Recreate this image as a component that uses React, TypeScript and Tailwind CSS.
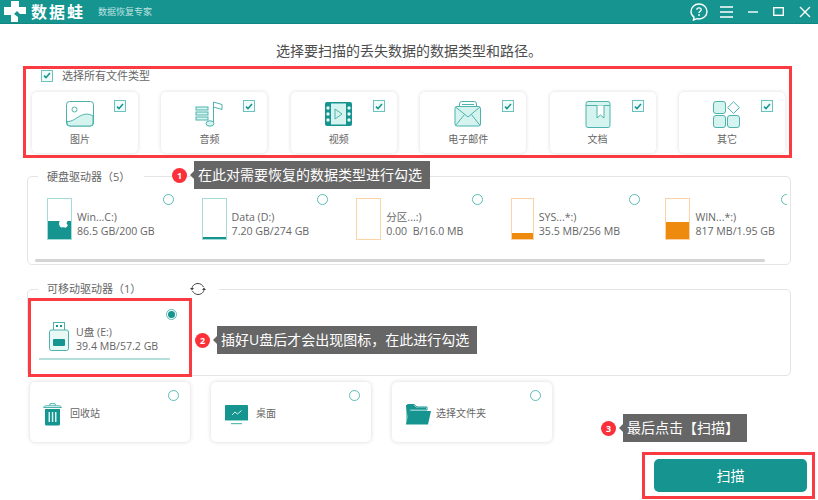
import React from 'react'

const FONT = 'font-["Open_Sans","Noto_Sans_CJK_SC",sans-serif]'

const Radio = ({ checked = false }: { checked?: boolean }) => (
  <div className="w-[11px] h-[11px] rounded-full border border-[#5bbdb6] bg-white flex items-center justify-center shrink-0">
    {checked && <div className="w-[7px] h-[7px] rounded-full bg-[#159490]" />}
  </div>
)

const Check = () => (
  <div className="w-[12px] h-[12px] border border-[#6cc2bc] bg-[#f1fbf9] flex items-center justify-center shrink-0">
    <svg width="8" height="7" viewBox="0 0 8 7" fill="none">
      <path d="M1 3.6 L3 5.6 L7 1" stroke="#159490" strokeWidth="1.5" />
    </svg>
  </div>
)

const S = '#4db3ac'
const F = '#d6f4ef'

const ImageIcon = () => (
  <svg width="28" height="26" viewBox="0 0 28 26" fill="none">
    <rect x="0.5" y="0.5" width="27" height="24.5" rx="3" fill="#fff" stroke={S} />
    <circle cx="8.5" cy="8.5" r="2.5" stroke={S} />
    <path d="M1 20.5 C6 21 10 17 14 15 C18 13 22 12 27 15 L27 22 Q27 25 24 25 L4 25 Q1 25 1 22 Z" fill={F} stroke={S} />
  </svg>
)

const MusicIcon = () => (
  <svg width="28" height="26" viewBox="0 0 28 26" fill="none">
    <rect x="1" y="6" width="12" height="3" fill={F} stroke={S} />
    <rect x="1" y="11" width="12" height="3" fill={F} stroke={S} />
    <rect x="1" y="16" width="12" height="3" fill={F} stroke={S} />
    <ellipse cx="15" cy="22.5" rx="4" ry="2.7" fill={F} stroke={S} />
    <path d="M18.5 22 L18.5 1 L27 3.5 L27 8.5 L18.5 6" fill="#fff" stroke={S} />
  </svg>
)

const VideoIcon = () => (
  <svg width="28" height="24" viewBox="0 0 28 24" fill="none">
    <rect x="0" y="0" width="27" height="24" rx="2" fill="#159490" />
    <rect x="6" y="1.5" width="15" height="21" fill={F} />
    <path d="M10 7 L17 12 L10 17 Z" fill={F} stroke={S} />
    <circle cx="3" cy="6" r="1.7" fill="#e8f7f5" />
    <circle cx="3" cy="12" r="1.7" fill="#e8f7f5" />
    <circle cx="3" cy="18" r="1.7" fill="#e8f7f5" />
    <circle cx="24" cy="6" r="1.7" fill="#e8f7f5" />
    <circle cx="24" cy="12" r="1.7" fill="#e8f7f5" />
    <circle cx="24" cy="18" r="1.7" fill="#e8f7f5" />
  </svg>
)

const MailIcon = () => (
  <svg width="28" height="26" viewBox="0 0 28 26" fill="none">
    <rect x="5.5" y="0.5" width="17" height="7" rx="2.5" fill="#fff" stroke={S} />
    <line x1="8" y1="3.5" x2="20" y2="3.5" stroke={S} />
    <rect x="1" y="5.5" width="25.5" height="19.5" rx="2" fill={F} stroke={S} />
    <path d="M1.5 6 L14 16 L26 6 M1.5 24.5 L10.5 13.5 M26 24.5 L17.5 13.5" stroke={S} />
  </svg>
)

const DocIcon = () => (
  <svg width="26" height="27" viewBox="0 0 26 27" fill="none">
    <rect x="1" y="0.5" width="24" height="26" rx="2" fill={F} stroke={S} />
    <line x1="1" y1="4.5" x2="25" y2="4.5" stroke={S} />
    <path d="M12 4.5 L12 17 L15.5 14 L19 17 L19 4.5" fill="#fff" stroke={S} />
  </svg>
)

const OtherIcon = () => (
  <svg width="27" height="27" viewBox="0 0 27 27" fill="none">
    <rect x="0.5" y="0.5" width="12" height="12" rx="2.5" fill={F} stroke={S} />
    <rect x="0.5" y="14.5" width="12" height="12" rx="2.5" fill={F} stroke={S} />
    <rect x="14.5" y="14.5" width="12" height="12" rx="2.5" fill={F} stroke={S} />
    <path d="M20.5 0.8 L26.4 6.6 L20.5 12.4 L14.6 6.6 Z" fill="#fff" stroke={S} />
  </svg>
)

const fileTypes = [
  { label: '图片', icon: <ImageIcon /> },
  { label: '音频', icon: <MusicIcon /> },
  { label: '视频', icon: <VideoIcon /> },
  { label: '电子邮件', icon: <MailIcon /> },
  { label: '文档', icon: <DocIcon /> },
  { label: '其它', icon: <OtherIcon /> },
]

interface Drive {
  name: string
  size: string
  fill: number
  system: boolean
  apple?: boolean
  iconWidth: string
  radioShift?: string
}

const drives: Drive[] = [
  { name: 'Win...C:)', size: '86.5 GB/200 GB', fill: 18, system: true, apple: true, iconWidth: 'w-[25px]' },
  { name: 'Data (D:)', size: '7.20 GB/274 GB', fill: 2, system: true, iconWidth: 'w-[25px]', radioShift: 'mr-[1px]' },
  { name: '分区...:)', size: '0.00  B/16.0 MB', fill: 0, system: false, iconWidth: 'w-[25px]' },
  { name: 'SYS...*:)', size: '35.5 MB/256 MB', fill: 6, system: false, iconWidth: 'w-[23px]', radioShift: '-mr-[2px]' },
  { name: 'WIN...*:)', size: '817 MB/1.95 GB', fill: 17, system: false, iconWidth: 'w-[25px]' },
]

const DriveCard = ({ drive }: { drive: Drive }) => (
  <div className="w-[127px] shrink-0 flex items-start">
    <div
      className={`relative mt-[4px] ${drive.iconWidth} h-[42px] border flex items-end shrink-0 ${
        drive.system ? 'border-[#a5dcd7]' : 'border-[#fbd3a6]'
      }`}
    >
      <div
        className={`w-full ${drive.system ? 'bg-[#159490]' : 'bg-[#ee8a0e]'}`}
        style={{ height: drive.fill }}
      />
      {drive.apple && (
        <svg className="absolute right-[3px] bottom-[11px]" width="9" height="10" viewBox="0 0 9 10">
          <path d="M4.5 2.5 C6 1.5 8 2 8.5 3.5 C7 4.5 7.5 6.5 9 7 C8 9 7 10 5.5 9.5 C4.5 9.2 4 9.2 3 9.5 C1 10 0 7 0 5 C0 3 2.5 1.5 4.5 2.5 Z M4.5 2 C4.5 1 5.2 0.2 6.2 0 C6.4 1 5.5 2 4.5 2 Z" fill="#fff" />
        </svg>
      )}
    </div>
    <div className="ml-[5px] mt-[16px] text-[10.6px] leading-[14px] text-[#666] whitespace-pre">
      <div>{drive.name}</div>
      <div>{drive.size}</div>
    </div>
    <div className={`ml-auto ${drive.radioShift ?? ''}`}>
      <Radio />
    </div>
  </div>
)

const TrashIcon = () => (
  <svg width="19" height="23" viewBox="0 0 19 23" fill="none">
    <path d="M0.5 4.5 Q1 3 3 2.8 L16 2.8 Q18 3 18.5 4.5 Z" fill="#fff" stroke={S} />
    <path d="M6.5 2.5 L7 0.7 L12 0.7 L12.5 2.5" stroke={S} />
    <path d="M2 6 L17 6 L17 21 Q17 22.5 15.5 22.5 L3.5 22.5 Q2 22.5 2 21 Z" fill="#159490" />
    <rect x="5.5" y="9" width="1.5" height="10" fill="#d6f4ef" />
    <rect x="8.8" y="9" width="1.5" height="10" fill="#d6f4ef" />
    <rect x="12" y="9" width="1.5" height="10" fill="#d6f4ef" />
  </svg>
)

const DesktopIcon = () => (
  <svg width="23" height="20" viewBox="0 0 23 20" fill="none">
    <path d="M0 1 Q0 0 1 0 L22 0 Q23 0 23 1 L23 15 L0 15 Z" fill="#159490" />
    <path d="M7 10 L10 7 L12.5 9 L16.5 5.5" stroke="#d6f4ef" strokeWidth="1" />
    <rect x="0" y="15" width="23" height="1" fill="#8fd3cd" />
    <rect x="6" y="18" width="11" height="1.2" fill="#5cbcb5" />
  </svg>
)

const FolderIcon = () => (
  <svg width="26" height="21" viewBox="0 0 26 21" fill="none">
    <path d="M2 20 L2 1.5 Q2 0.5 3 0.5 L9 0.5 L12 3 L22 3 L22 6 L5 6 Z" fill="#fff" stroke="#159490" />
    <path d="M1 2 L1 1 L8.5 1 L11.5 3.5 L21 3.5 L21 5.5 L5 5.5 L3 15 Z" fill="#159490" />
    <path d="M5 7 L26 7 L23 20.5 L1 20.5 Z" fill="#159490" />
  </svg>
)

const locations = [
  { label: '回收站', icon: <TrashIcon />, iconLeft: 'ml-[13px]', gap: 'ml-[8px]' },
  { label: '桌面', icon: <DesktopIcon />, iconLeft: 'ml-[14px]', gap: 'ml-[8px]' },
  { label: '选择文件夹', icon: <FolderIcon />, iconLeft: 'ml-[13px]', gap: 'ml-[5px]' },
]

const Note = ({ n, text, pos, badge }: { n: number; text: string; pos: string; badge: string }) => (
  <>
    <div className={`absolute ${badge} w-[15px] h-[15px] rounded-full bg-[#fb3038] text-white text-[9px] font-bold flex items-center justify-center`}>
      {n}
    </div>
    <div className={`absolute ${pos} h-[28px] bg-[#666] text-white text-[14px] leading-[28px] pl-[4px] pr-[8px] whitespace-nowrap`}>
      <div className="absolute left-[-4px] top-[10px] w-0 h-0 border-y-[4px] border-y-transparent border-r-[4px] border-r-[#666]" />
      {text}
    </div>
  </>
)

export default function App() {
  return (
    <div className={`relative w-[818px] h-[500px] overflow-hidden bg-white ${FONT}`}>
      {/* title bar */}
      <header className="h-[24px] bg-[#159490] border-b border-[#0f8682] flex items-center">
        <svg className="ml-[4px] shrink-0" width="22" height="22" viewBox="0 0 22 22">
          <path d="M7 0 L15 0 L15 6 L22 6 L22 13 L16 13 L13 10 L10 13 L14 16 L14 21 L7 21 L7 14 L0 14 L0 6 L7 6 Z" fill="#fff" />
        </svg>
        <span className="ml-[5px] w-[54px] text-[16px] leading-[22px] font-bold tracking-[2px] text-white whitespace-nowrap">数据蛙</span>
        <span className="ml-[13px] text-[9px] text-[#bfe3e0]">数据恢复专家</span>
        <div className="ml-auto flex items-center pr-[7px] text-white">
          <svg width="18" height="18" viewBox="0 0 18 18" fill="none">
            <path d="M9 1 C4.5 1 1 4.2 1 8.5 C1 11 2.2 13 4 14.2 L3.5 17 L7 15.7 C7.6 15.9 8.3 16 9 16 C13.5 16 17 12.8 17 8.5 C17 4.2 13.5 1 9 1 Z" stroke="#fff" strokeWidth="1.4" />
            <path d="M6.8 6.8 C6.8 5.5 7.8 4.9 9 4.9 C10.2 4.9 11.2 5.6 11.2 6.8 C11.2 8.2 9 8.3 9 10" stroke="#fff" strokeWidth="1.3" />
            <circle cx="9" cy="12" r="0.9" fill="#fff" />
          </svg>
          <svg className="ml-[12px]" width="13" height="12" viewBox="0 0 13 12">
            <path d="M0 1 H13 M0 6 H13 M0 11 H13" stroke="#fff" strokeWidth="1.3" />
          </svg>
          <svg className="ml-[15px]" width="10" height="2" viewBox="0 0 10 2">
            <path d="M0 1 H10" stroke="#fff" strokeWidth="1.4" />
          </svg>
          <svg className="ml-[15px]" width="11" height="9" viewBox="0 0 11 9" fill="none">
            <rect x="0.7" y="0.7" width="9.6" height="7.6" stroke="#fff" strokeWidth="1.4" />
          </svg>
          <svg className="ml-[15px]" width="12" height="12" viewBox="0 0 12 12">
            <path d="M1 1 L11 11 M11 1 L1 11" stroke="#fff" strokeWidth="1.4" />
          </svg>
        </div>
      </header>

      <h1 className="h-[42px] pt-[17px] text-center text-[14px] leading-[20px] font-normal text-[#4d4d4d]">
        选择要扫描的丢失数据的数据类型和路径。
      </h1>

      {/* file types */}
      <section className="ml-[23px] w-[769px] h-[92px] border-[3px] border-[#fb3b42]">
        <div className="flex items-center h-[13px] pl-[15px]">
          <Check />
          <span className="ml-[9px] mt-[2px] text-[11px] text-[#666] whitespace-nowrap">选择所有文件类型</span>
        </div>
        <div className="mt-[10px] pl-[6px] flex gap-[23.4px]">
          {fileTypes.map((t) => (
            <div
              key={t.label}
              className="relative w-[106px] h-[61px] shrink-0 rounded-[5px] bg-white shadow-[0_0_4px_rgba(0,0,0,0.14)] flex flex-col items-center pt-[9px] pr-[10px]"
            >
              <div className="h-[26px] flex items-center">{t.icon}</div>
              <div className="mt-[5px] text-[10px] leading-[14px] text-[#666]">{t.label}</div>
              <div className="absolute left-[82px] top-[8px]">
                <Check />
              </div>
            </div>
          ))}
        </div>
      </section>

      {/* hard drives */}
      <section className="mt-[18px] ml-[27px] w-[764px] h-[89px] border border-[#e4e4e4] rounded-[5px]">
        <div className="-mt-[7px] ml-[10px] w-[106px] h-[14px] pl-[9px] bg-white text-[11px] leading-[14px] text-[#666] whitespace-nowrap">
          硬盘驱动器（5）
        </div>
        <div className="mt-[10px] ml-[19px] mr-[3px] flex gap-[27.6px] overflow-hidden">
          {drives.map((d) => (
            <DriveCard key={d.name} drive={d} />
          ))}
        </div>
        <div className="mt-[19px] ml-[7px] w-[730px] h-[3px] bg-[#d4d4d4] rounded-full" />
      </section>

      {/* removable drives */}
      <section className="mt-[24px] ml-[27px] w-[764px] h-[87px] border border-[#e4e4e4] rounded-[5px]">
        <div className="-mt-[8px] ml-[10px] w-[181px] h-[14px] pl-[9px] bg-white flex items-center text-[11px] leading-[14px] text-[#666] whitespace-nowrap">
          可移动驱动器（1）
          <svg className="ml-[49px] shrink-0" width="16" height="14" viewBox="0 0 16 14" fill="none">
            <path d="M2 7 C2 3.5 5 1.5 8 1.5 C10.5 1.5 12.5 3 13.5 5 M14 7 C14 10.5 11 12.5 8 12.5 C5.5 12.5 3.5 11 2.5 9" stroke="#444" strokeWidth="1" />
            <path d="M0 6 L4 6 L2 8.5 Z M12 8 L16 8 L14 5.5 Z" fill="#444" />
          </svg>
        </div>
        <div className="relative mt-[2px] w-[164px] h-[79px] border-[3px] border-[#fb3b42] bg-white">
          <div className="absolute left-[135px] top-[8px]">
            <Radio checked />
          </div>
          <div className="pl-[18px] pt-[21px] flex items-start">
            <svg className="shrink-0" width="20" height="29" viewBox="0 0 20 29" fill="none">
              <rect x="4.5" y="0.5" width="11" height="8" fill="#fff" stroke={S} />
              <rect x="7" y="3" width="2" height="2" fill="#159490" />
              <rect x="11" y="3" width="2" height="2" fill="#159490" />
              <rect x="0.5" y="8" width="19" height="20.5" rx="2" fill="#e8f8f5" stroke={S} />
              <rect x="4" y="17" width="12" height="7" rx="1" fill="#159490" />
            </svg>
            <div className="ml-[7px] mt-[3px] text-[10.6px] leading-[14px] text-[#666] whitespace-nowrap">
              <div>U盘 (E:)</div>
              <div>39.4 MB/57.2 GB</div>
            </div>
          </div>
          <div className="mt-[5px] ml-[8px] w-[131px] h-[2px] bg-[#b5dedb]" />
        </div>
      </section>

      {/* other locations */}
      <div className="mt-[6px] ml-[30px] flex gap-[21px]">
        {locations.map((l) => (
          <div
            key={l.label}
            className="relative w-[160px] h-[60px] rounded-[5px] bg-white shadow-[0_0_4px_rgba(0,0,0,0.16)] flex items-center"
          >
            <div className={`${l.iconLeft} shrink-0 flex mt-[5px]`}>{l.icon}</div>
            <span className={`${l.gap} mt-[2px] text-[10px] text-[#666] whitespace-nowrap`}>{l.label}</span>
            <div className="absolute right-[11px] top-[8px]">
              <Radio />
            </div>
          </div>
        ))}
      </div>

      {/* scan button */}
      <div className="mt-[10px] ml-[642px] w-[173px] h-[47px] border-[3px] border-[#fb3b42] pl-[9px] pt-[4px]">
        <button className="w-[153px] h-[33px] rounded-[5px] bg-[#159490] text-white text-[14px]">扫描</button>
      </div>

      {/* annotations */}
      <Note n={1} text="在此对需要恢复的数据类型进行勾选" pos="left-[194px] top-[161px]" badge="left-[172px] top-[168px]" />
      <Note n={2} text="插好U盘后才会出现图标，在此进行勾选" pos="left-[217px] top-[326px]" badge="left-[195px] top-[333px]" />
      <Note n={3} text="最后点击【扫描】" pos="left-[623px] top-[414px]" badge="left-[601px] top-[421px]" />
    </div>
  )
}
